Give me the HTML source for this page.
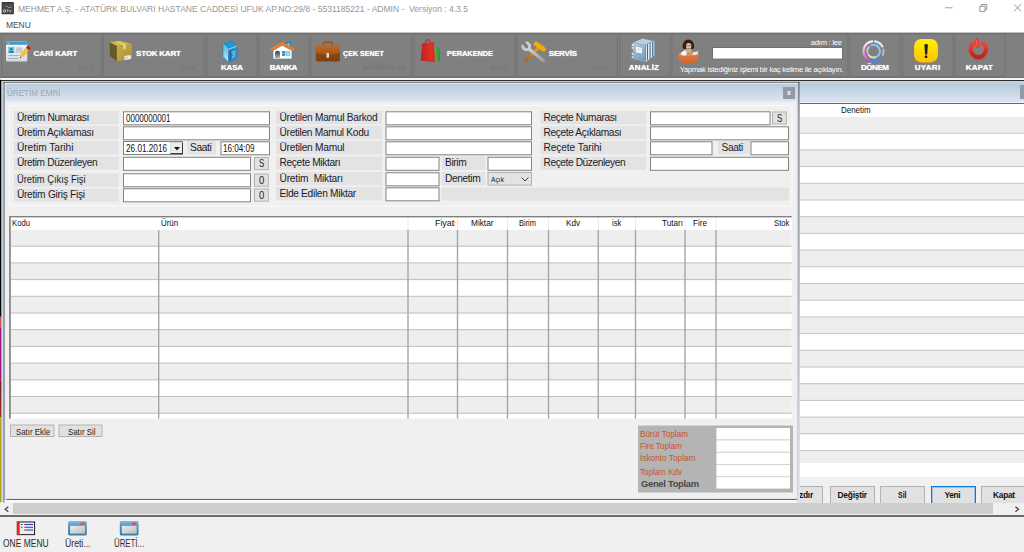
<!DOCTYPE html>
<html lang="tr"><head><meta charset="utf-8"><title>MEHMET A.Ş. - ÜRETİM EMRİ</title>
<style>
html,body{margin:0;padding:0}
body{width:1024px;height:552px;position:relative;overflow:hidden;background:#fff;font-family:"Liberation Sans",sans-serif;color:#1c1c1c}
div,span,svg{position:absolute;box-sizing:border-box;display:block}
span{white-space:nowrap;line-height:1;transform-origin:0 50%}
.lbl{background:#e3e3e3}
.lt{color:#1b1b2b}
.inp{background:#fff;border:1px solid #828282}
.btn{background:#e1e1e1;border:1px solid #b2b2b2}
.tb{background:#808080;border:1px solid #747474}
.tt{font-weight:bold;color:#fff;text-shadow:0 0 1px #e8e8e8}
.te{color:#747474}
.th{color:#111}
.rb{font-weight:bold;color:#111}
.tot{color:#c9532c}
.it{color:#111}
</style></head><body>

<svg style="left:1px;top:1px" width="14" height="14" viewBox="1 1 14 14"><rect x="1.600" y="2.100" width="12.300" height="12.250" rx="0.800" fill="#3a3a3a"/><rect x="2.600" y="3.100" width="10.300" height="10.250" fill="#484848"/><path d="M5.800 6.400h1.800M8.400 7.500h2.600" stroke="#36c050" stroke-width="1" stroke-linecap="round" fill="none"/><path d="M10 5.300h1.400" stroke="#8a8a8a" stroke-width="0.700"/><circle cx="4.500" cy="10.900" r="1.300" fill="none" stroke="#d8d8d8" stroke-width="0.900"/><path d="M7.600 9.600l3.400 2.600M7.600 12v-2.400M10.900 9.800v1.800" stroke="#c8c8c8" stroke-width="0.800" fill="none"/></svg>
<span style="left:18.3px;top:4px;font-size:9.4px;color:#969696;transform:scaleX(0.9111);">MEHMET A.Ş. - ATATÜRK BULVARI HASTANE CADDESİ UFUK AP.NO:29/8 - 5531185221 - ADMIN -&nbsp; Versiyon : 4.3.5</span>
<svg style="left:940px;top:0" width="84" height="16" viewBox="0 0 84 16"><path d="M5 7.8h7.5" stroke="#9a9a9a" stroke-width="1" fill="none"/><path d="M39.8 6.2h5.2v5.2h-5.2zM41.6 6.2v-1.7h5.2v5.2h-1.8" stroke="#8a8a8a" stroke-width="0.9" fill="none"/><path d="M74 4.3l7 7M81 4.3l-7 7" stroke="#8a8a8a" stroke-width="0.9" fill="none"/></svg>
<span style="left:6px;top:20px;font-size:9.4px;color:#484848;transform:scaleX(0.8964);">MENU</span>
<svg style="left:0;top:0" width="1024" height="90" viewBox="0 0 1024 90"><rect x="0" y="32.700" width="1024" height="44.500" fill="#808080"/><rect x="0" y="32.800" width="1024" height="0.900" fill="#6e6e6e"/><rect x="1.85" y="34" width="99.90" height="42.300" fill="none" stroke="#6f6f6f" stroke-width="0.800"/><rect x="103.65" y="34" width="100.40" height="42.300" fill="none" stroke="#6f6f6f" stroke-width="0.800"/><rect x="206.75" y="34" width="50.20" height="42.300" fill="none" stroke="#6f6f6f" stroke-width="0.800"/><rect x="258.95" y="34" width="50.00" height="42.300" fill="none" stroke="#6f6f6f" stroke-width="0.800"/><rect x="310.95" y="34" width="100.50" height="42.300" fill="none" stroke="#6f6f6f" stroke-width="0.800"/><rect x="413.85" y="34" width="101.10" height="42.300" fill="none" stroke="#6f6f6f" stroke-width="0.800"/><rect x="516.85" y="34" width="100.60" height="42.300" fill="none" stroke="#6f6f6f" stroke-width="0.800"/><rect x="619.85" y="34" width="50.10" height="42.300" fill="none" stroke="#6f6f6f" stroke-width="0.800"/><rect x="671.95" y="34" width="176.00" height="42.300" fill="none" stroke="#6f6f6f" stroke-width="0.800"/><rect x="849.95" y="34" width="50.00" height="42.300" fill="none" stroke="#6f6f6f" stroke-width="0.800"/><rect x="902.35" y="34" width="50.60" height="42.300" fill="none" stroke="#6f6f6f" stroke-width="0.800"/><rect x="954.95" y="34" width="50.00" height="42.300" fill="none" stroke="#6f6f6f" stroke-width="0.800"/></svg>
<div style="left:0px;top:76.7px;width:1024px;height:0.9px;background:#727272"></div>
<div style="left:0px;top:77.5px;width:1024px;height:2.4px;background:#f6f6f6"></div>
<div style="left:0px;top:79.8px;width:1024px;height:1.1px;background:#2c2c2c"></div>
<span class="tt" style="left:33.5px;top:50px;font-size:8px;letter-spacing:0.000px;">CARİ KART</span>
<span class="te" style="left:78px;top:64px;font-size:7.8px;transform:scaleX(0.7894);">EKLE</span>
<span class="tt" style="left:136px;top:50px;font-size:8px;letter-spacing:-0.210px;">STOK KART</span>
<span class="te" style="left:180.25px;top:64px;font-size:7.8px;transform:scaleX(0.8019);">EKLE</span>
<span class="tt" style="left:343.25px;top:50px;font-size:8px;transform:scaleX(0.8898);">ÇEK SENET</span>
<span class="te" style="left:362.5px;top:64px;font-size:7.8px;transform:scaleX(0.8807);">BORDROLAR</span>
<span class="tt" style="left:446.75px;top:50px;font-size:8px;transform:scaleX(0.9157);">PERAKENDE</span>
<span class="te" style="left:490.75px;top:64px;font-size:7.8px;transform:scaleX(0.8144);">EKLE</span>
<span class="tt" style="left:548.75px;top:50px;font-size:8px;letter-spacing:-0.173px;">SERVİS</span>
<span class="te" style="left:593px;top:64px;font-size:7.8px;transform:scaleX(0.8269);">EKLE</span>
<span class="tt" style="left:221px;top:64px;font-size:8px;letter-spacing:-0.192px;">KASA</span>
<span class="tt" style="left:269.75px;top:64px;font-size:8px;letter-spacing:-0.309px;">BANKA</span>
<span class="tt" style="left:628.75px;top:64px;font-size:8px;letter-spacing:0.168px;">ANALİZ</span>
<span class="tt" style="left:861px;top:64px;font-size:8px;letter-spacing:-0.451px;">DÖNEM</span>
<span class="tt" style="left:914.75px;top:64px;font-size:8px;letter-spacing:0.299px;">UYARI</span>
<span class="tt" style="left:965.75px;top:64px;font-size:8px;letter-spacing:0.194px;">KAPAT</span>
<svg style="left:0;top:0" width="1024" height="70" viewBox="0 0 1024 70"><rect x="712.200" y="47.200" width="130.600" height="12.100" fill="#6c6c6c"/><rect x="713" y="48" width="129" height="10.600" fill="#fff"/></svg>
<span style="left:810.75px;top:39px;font-size:7.6px;color:#fff;letter-spacing:-0.222px;">adım : lee</span>
<span style="left:679.75px;top:66px;font-size:7.6px;color:#fff;letter-spacing:-0.242px;">Yapmak istediğiniz işlemi bir kaç kelime ile açıklayın.</span>
<div style="left:0px;top:80.9px;width:1024px;height:435px;background:#f0f0f0"></div>
<div style="left:1.3px;top:80.9px;width:1023px;height:20.8px;background:linear-gradient(#c3d3e3,#b9cbdd 18%,#dbe6f1)"></div>
<div style="left:1.3px;top:80.9px;width:2.4px;height:421.5px;background:#c6d6e7"></div>
<div style="left:1019.8px;top:85.3px;width:6px;height:13.6px;background:#8f9ba6"></div>
<div style="left:799.5px;top:101.7px;width:225px;height:1.4px;background:#eef2f6"></div>
<div style="left:799.5px;top:103px;width:225px;height:1px;background:#6a6a6a"></div>
<div style="left:799.5px;top:104px;width:225px;height:372.5px;background:#fff"></div>
<svg style="left:0;top:0" width="1024" height="552" viewBox="0 0 1024 552"><rect x="799.5" y="117.00" width="225" height="16.20" fill="#eeeeee"/><rect x="799.5" y="149.90" width="225" height="16.70" fill="#eeeeee"/><rect x="799.5" y="183.30" width="225" height="16.70" fill="#eeeeee"/><rect x="799.5" y="216.70" width="225" height="16.70" fill="#eeeeee"/><rect x="799.5" y="250.10" width="225" height="16.70" fill="#eeeeee"/><rect x="799.5" y="283.50" width="225" height="16.70" fill="#eeeeee"/><rect x="799.5" y="316.90" width="225" height="16.70" fill="#eeeeee"/><rect x="799.5" y="350.30" width="225" height="16.70" fill="#eeeeee"/><rect x="799.5" y="383.70" width="225" height="16.70" fill="#eeeeee"/><rect x="799.5" y="417.10" width="225" height="16.70" fill="#eeeeee"/><rect x="799.5" y="450.50" width="225" height="12.50" fill="#eeeeee"/><rect x="799.5" y="132.70" width="225" height="1" fill="#c4c4c4"/><rect x="799.5" y="149.40" width="225" height="1" fill="#c4c4c4"/><rect x="799.5" y="166.10" width="225" height="1" fill="#c4c4c4"/><rect x="799.5" y="182.80" width="225" height="1" fill="#c4c4c4"/><rect x="799.5" y="199.50" width="225" height="1" fill="#c4c4c4"/><rect x="799.5" y="216.20" width="225" height="1" fill="#c4c4c4"/><rect x="799.5" y="232.90" width="225" height="1" fill="#c4c4c4"/><rect x="799.5" y="249.60" width="225" height="1" fill="#c4c4c4"/><rect x="799.5" y="266.30" width="225" height="1" fill="#c4c4c4"/><rect x="799.5" y="283.00" width="225" height="1" fill="#c4c4c4"/><rect x="799.5" y="299.70" width="225" height="1" fill="#c4c4c4"/><rect x="799.5" y="316.40" width="225" height="1" fill="#c4c4c4"/><rect x="799.5" y="333.10" width="225" height="1" fill="#c4c4c4"/><rect x="799.5" y="349.80" width="225" height="1" fill="#c4c4c4"/><rect x="799.5" y="366.50" width="225" height="1" fill="#c4c4c4"/><rect x="799.5" y="383.20" width="225" height="1" fill="#c4c4c4"/><rect x="799.5" y="399.90" width="225" height="1" fill="#c4c4c4"/><rect x="799.5" y="416.60" width="225" height="1" fill="#c4c4c4"/><rect x="799.5" y="433.30" width="225" height="1" fill="#c4c4c4"/><rect x="799.5" y="450.00" width="225" height="1" fill="#c4c4c4"/></svg>
<span class="th" style="left:840.6px;top:106px;font-size:9px;transform:scaleX(0.8832);">Denetim</span>
<div class="btn" style="left:780px;top:486.2px;width:43px;height:20px;"></div>
<div class="btn" style="left:830px;top:486.2px;width:45px;height:20px;"></div>
<span class="rb" style="left:837.5px;top:491px;font-size:8.4px;letter-spacing:-0.225px;">Değiştir</span>
<div class="btn" style="left:880px;top:486.2px;width:45px;height:20px;"></div>
<span class="rb" style="left:897.5px;top:491px;font-size:8.4px;transform:scaleX(0.8293);">Sil</span>
<div class="btn" style="left:930.5px;top:486.2px;width:45.0px;height:20px;border:1px solid #0a7ad8;box-shadow:inset 0 0 0 1px rgba(10,122,216,0.3);"></div>
<span class="rb" style="left:944.5px;top:491px;font-size:8.4px;letter-spacing:-0.353px;">Yeni</span>
<div class="btn" style="left:981px;top:486.2px;width:49px;height:20px;"></div>
<span class="rb" style="left:993px;top:491px;font-size:8.4px;letter-spacing:-0.285px;">Kapat</span>
<div style="left:799.5px;top:487px;width:23px;height:15px;overflow:hidden"><span class="rb" style="right:9.6px;top:4px;font-size:8.4px;letter-spacing:-0.250px">Yazdır</span></div>
<svg style="left:0;top:0" width="1024" height="552" viewBox="0 0 1024 552"><defs><linearGradient id="gTitle" x1="0" y1="0" x2="0" y2="1"><stop offset="0" stop-color="#b9cbdd"/><stop offset="1" stop-color="#dbe6f1"/></linearGradient><linearGradient id="gRB" x1="0" y1="0" x2="0" y2="1"><stop offset="0" stop-color="#4a4e54"/><stop offset="0.08" stop-color="#6a7078"/><stop offset="0.55" stop-color="#98a2ac"/><stop offset="0.85" stop-color="#c8d0da"/><stop offset="1" stop-color="#dde4ec"/></linearGradient></defs><rect x="3.600" y="81.900" width="795.900" height="420.700" fill="#f0f0f0"/><rect x="4.700" y="83.600" width="792.200" height="18" fill="url(#gTitle)"/><rect x="4.700" y="82.800" width="792.200" height="0.900" fill="#e3ebf5"/><rect x="3.600" y="81.900" width="795.900" height="0.900" fill="#6a6a6a"/><rect x="3.550" y="81.900" width="1.200" height="420.700" fill="#5c5c5c"/><rect x="4.700" y="83.600" width="0.800" height="418.500" fill="#e2eaf3"/><rect x="798.200" y="81.900" width="1.300" height="420.700" fill="url(#gRB)"/><rect x="796.900" y="82.800" width="1.300" height="419.800" fill="#c6d6ea"/><rect x="4.700" y="500" width="792.200" height="2.600" fill="#f8f8f8"/><rect x="6.200" y="498.900" width="790.700" height="1.100" fill="#6a6a6a"/></svg>
<span style="left:6.5px;top:88px;font-size:9.6px;color:#a2a6ae;transform:scaleX(0.8433);">ÜRETİM EMRİ</span>
<div style="left:782.8px;top:86.9px;width:12.1px;height:11.8px;background:#8f9ba6"></div>
<span style="left:787px;top:89px;font-size:7px;font-weight:bold;color:#fff">x</span>
<svg style="left:0;top:0" width="1024" height="552" viewBox="0 0 1024 552"><rect x="9.00" y="105.00" width="783.50" height="101.50" fill="#fafafa"/><rect x="10.00" y="106.00" width="781.50" height="99.50" fill="#f0f0f0"/><rect x="14.00" y="111.00" width="104.70" height="13.30" fill="#e3e3e3"/><rect x="14.00" y="126.00" width="104.70" height="13.30" fill="#e3e3e3"/><rect x="14.00" y="141.00" width="104.70" height="13.30" fill="#e3e3e3"/><rect x="14.00" y="156.50" width="104.70" height="13.30" fill="#e3e3e3"/><rect x="14.00" y="173.50" width="104.70" height="13.30" fill="#e3e3e3"/><rect x="14.00" y="188.50" width="104.70" height="13.30" fill="#e3e3e3"/><rect x="276.00" y="111.00" width="106.00" height="13.30" fill="#e3e3e3"/><rect x="276.00" y="126.00" width="106.00" height="13.30" fill="#e3e3e3"/><rect x="276.00" y="141.00" width="106.00" height="13.30" fill="#e3e3e3"/><rect x="276.00" y="156.50" width="106.00" height="13.30" fill="#e3e3e3"/><rect x="276.00" y="172.00" width="106.00" height="13.30" fill="#e3e3e3"/><rect x="276.00" y="187.00" width="106.00" height="13.30" fill="#e3e3e3"/><rect x="540.50" y="111.00" width="105.50" height="13.30" fill="#e3e3e3"/><rect x="540.50" y="126.00" width="105.50" height="13.30" fill="#e3e3e3"/><rect x="540.50" y="141.00" width="105.50" height="13.30" fill="#e3e3e3"/><rect x="540.50" y="156.50" width="105.50" height="13.30" fill="#e3e3e3"/><rect x="123.00" y="111.30" width="147.00" height="14.00" fill="#828282"/><rect x="124.00" y="112.30" width="145.00" height="12.00" fill="#ffffff"/><rect x="123.00" y="126.30" width="147.00" height="14.00" fill="#828282"/><rect x="124.00" y="127.30" width="145.00" height="12.00" fill="#ffffff"/><rect x="187.00" y="141.00" width="29.00" height="13.30" fill="#e3e3e3"/><rect x="220.50" y="141.30" width="49.50" height="14.00" fill="#828282"/><rect x="221.50" y="142.30" width="47.50" height="12.00" fill="#ffffff"/><rect x="123.00" y="156.80" width="128.00" height="14.00" fill="#828282"/><rect x="124.00" y="157.80" width="126.00" height="12.00" fill="#ffffff"/><rect x="254.00" y="157.00" width="14.80" height="13.20" fill="#b2b2b2"/><rect x="255.00" y="158.00" width="12.80" height="11.20" fill="#e1e1e1"/><rect x="123.00" y="173.30" width="128.00" height="14.00" fill="#828282"/><rect x="124.00" y="174.30" width="126.00" height="12.00" fill="#ffffff"/><rect x="254.00" y="173.50" width="14.80" height="13.20" fill="#b2b2b2"/><rect x="255.00" y="174.50" width="12.80" height="11.20" fill="#e1e1e1"/><rect x="123.00" y="188.30" width="128.00" height="14.00" fill="#828282"/><rect x="124.00" y="189.30" width="126.00" height="12.00" fill="#ffffff"/><rect x="254.00" y="188.50" width="14.80" height="13.20" fill="#b2b2b2"/><rect x="255.00" y="189.50" width="12.80" height="11.20" fill="#e1e1e1"/><rect x="385.50" y="111.30" width="146.50" height="14.00" fill="#828282"/><rect x="386.50" y="112.30" width="144.50" height="12.00" fill="#ffffff"/><rect x="385.50" y="126.30" width="146.50" height="14.00" fill="#828282"/><rect x="386.50" y="127.30" width="144.50" height="12.00" fill="#ffffff"/><rect x="385.50" y="141.30" width="146.50" height="14.00" fill="#828282"/><rect x="386.50" y="142.30" width="144.50" height="12.00" fill="#ffffff"/><rect x="385.50" y="156.80" width="54.00" height="14.00" fill="#828282"/><rect x="386.50" y="157.80" width="52.00" height="12.00" fill="#ffffff"/><rect x="385.50" y="172.30" width="54.00" height="14.00" fill="#828282"/><rect x="386.50" y="173.30" width="52.00" height="12.00" fill="#ffffff"/><rect x="385.50" y="187.30" width="54.00" height="14.00" fill="#828282"/><rect x="386.50" y="188.30" width="52.00" height="12.00" fill="#ffffff"/><rect x="441.50" y="156.50" width="44.00" height="13.30" fill="#e3e3e3"/><rect x="441.50" y="172.00" width="44.00" height="13.30" fill="#e3e3e3"/><rect x="487.50" y="156.80" width="44.50" height="14.00" fill="#828282"/><rect x="488.50" y="157.80" width="42.50" height="12.00" fill="#ffffff"/><rect x="487.50" y="172.00" width="44.50" height="13.60" fill="#b0b0b0"/><rect x="488.50" y="173.00" width="42.50" height="11.60" fill="#e3e3e3"/><rect x="441.50" y="187.50" width="347.50" height="13.00" fill="#e3e3e3"/><rect x="650.00" y="111.30" width="120.50" height="14.00" fill="#828282"/><rect x="651.00" y="112.30" width="118.50" height="12.00" fill="#ffffff"/><rect x="772.00" y="111.50" width="14.80" height="13.00" fill="#b2b2b2"/><rect x="773.00" y="112.50" width="12.80" height="11.00" fill="#e1e1e1"/><rect x="650.00" y="126.30" width="139.00" height="14.00" fill="#828282"/><rect x="651.00" y="127.30" width="137.00" height="12.00" fill="#ffffff"/><rect x="650.00" y="141.30" width="62.50" height="14.00" fill="#828282"/><rect x="651.00" y="142.30" width="60.50" height="12.00" fill="#ffffff"/><rect x="718.00" y="141.00" width="32.00" height="13.30" fill="#e3e3e3"/><rect x="750.50" y="141.30" width="38.50" height="14.00" fill="#828282"/><rect x="751.50" y="142.30" width="36.50" height="12.00" fill="#ffffff"/><rect x="650.00" y="156.80" width="139.00" height="14.00" fill="#828282"/><rect x="651.00" y="157.80" width="137.00" height="12.00" fill="#ffffff"/></svg>
<span class="lt" style="left:16.9px;top:113px;font-size:10.2px;letter-spacing:-0.320px;">Üretim Numarası</span>
<span class="lt" style="left:16.9px;top:128px;font-size:10.2px;letter-spacing:-0.303px;">Üretim Açıklaması</span>
<span class="lt" style="left:16.9px;top:143px;font-size:10.2px;letter-spacing:-0.032px;">Üretim Tarihi</span>
<span class="lt" style="left:16.9px;top:158px;font-size:10.2px;letter-spacing:-0.366px;">Üretim Düzenleyen</span>
<span class="lt" style="left:16.9px;top:175px;font-size:10.2px;transform:scaleX(0.9181);">Üretim Çıkış Fişi</span>
<span class="lt" style="left:16.9px;top:190px;font-size:10.2px;letter-spacing:-0.263px;">Üretim Giriş Fişi</span>
<span class="lt" style="left:279.5px;top:113px;font-size:10.2px;letter-spacing:-0.274px;">Üretilen Mamul Barkod</span>
<span class="lt" style="left:279.5px;top:128px;font-size:10.2px;letter-spacing:-0.304px;">Üretilen Mamul Kodu</span>
<span class="lt" style="left:279.5px;top:143px;font-size:10.2px;letter-spacing:-0.260px;">Üretilen Mamul</span>
<span class="lt" style="left:279.5px;top:158px;font-size:10.2px;letter-spacing:-0.346px;">Reçete Miktarı</span>
<span class="lt" style="left:279.5px;top:174px;font-size:10.2px;letter-spacing:-0.188px;">Üretim&nbsp; Miktarı</span>
<span class="lt" style="left:279.5px;top:189px;font-size:10.2px;letter-spacing:-0.321px;">Elde Edilen Miktar</span>
<span class="lt" style="left:543.5px;top:113px;font-size:10.2px;letter-spacing:-0.399px;">Reçete Numarası</span>
<span class="lt" style="left:543.5px;top:128px;font-size:10.2px;letter-spacing:-0.386px;">Reçete Açıklaması</span>
<span class="lt" style="left:543.5px;top:143px;font-size:10.2px;letter-spacing:-0.102px;">Reçete Tarihi</span>
<span class="lt" style="left:543.5px;top:158px;font-size:10.2px;letter-spacing:-0.420px;">Reçete Düzenleyen</span>
<span class="it" style="left:125.5px;top:113px;font-size:10.6px;transform:scaleX(0.7552);">0000000001</span>
<div class="inp" style="left:123px;top:141.3px;width:59.5px;height:14px;border-right:none"></div>
<span class="it" style="left:125.5px;top:143px;font-size:10.6px;transform:scaleX(0.7731);">26.01.2016</span>
<div style="left:170.3px;top:141.8px;width:12.3px;height:12.6px;background:#ececec;border:1px solid #3c3c3c;border-top-color:#d8d8d8;border-left-color:#dcdcdc"></div>
<svg style="left:173.500px;top:146.800px" width="6" height="4" viewBox="0 0 6 4"><path d="M0 0h6L3 3.4z" fill="#111"/></svg>
<span class="lt" style="left:190px;top:143px;font-size:10.2px;letter-spacing:-0.385px;">Saati</span>
<span class="it" style="left:223px;top:143px;font-size:10.6px;transform:scaleX(0.7636);">16:04:09</span>
<span style="left:258.7px;top:158px;font-size:11px;color:#222;transform:scaleX(0.7217);">S</span>
<span style="left:258.7px;top:175px;font-size:11px;color:#222;transform:scaleX(0.8653);">0</span>
<span style="left:258.7px;top:190px;font-size:11px;color:#222;transform:scaleX(0.8653);">0</span>
<span class="lt" style="left:445px;top:158px;font-size:10.2px;letter-spacing:-0.378px;">Birim</span>
<span class="lt" style="left:445px;top:174px;font-size:10.2px;letter-spacing:-0.375px;">Denetim</span>
<span style="left:490.8px;top:176px;font-size:7.8px;color:#222;transform:scaleX(0.8568);">Açık</span>
<svg style="left:521px;top:176.700px" width="8" height="5" viewBox="0 0 8 5"><path d="M0.5 0.5L4 4l3.5-3.5" stroke="#444" stroke-width="1" fill="none"/></svg>
<span style="left:776.7px;top:113px;font-size:11px;color:#222;transform:scaleX(0.7217);">S</span>
<span class="lt" style="left:721.5px;top:143px;font-size:10.2px;letter-spacing:-0.385px;">Saati</span>
<svg style="left:0;top:0" width="1024" height="552" viewBox="0 0 1024 552"><rect x="9" y="216.2" width="782.7" height="202.3" fill="#fff"/><rect x="10.9" y="230.00" width="780.8" height="16.20" fill="#eeeeee"/><rect x="10.9" y="262.90" width="780.8" height="16.70" fill="#eeeeee"/><rect x="10.9" y="296.30" width="780.8" height="16.70" fill="#eeeeee"/><rect x="10.9" y="329.70" width="780.8" height="16.70" fill="#eeeeee"/><rect x="10.9" y="363.10" width="780.8" height="16.70" fill="#eeeeee"/><rect x="10.9" y="396.50" width="780.8" height="16.70" fill="#eeeeee"/><rect x="10.9" y="245.70" width="780.8" height="1" fill="#bebebe"/><rect x="10.9" y="262.40" width="780.8" height="1" fill="#bebebe"/><rect x="10.9" y="279.10" width="780.8" height="1" fill="#bebebe"/><rect x="10.9" y="295.80" width="780.8" height="1" fill="#bebebe"/><rect x="10.9" y="312.50" width="780.8" height="1" fill="#bebebe"/><rect x="10.9" y="329.20" width="780.8" height="1" fill="#bebebe"/><rect x="10.9" y="345.90" width="780.8" height="1" fill="#bebebe"/><rect x="10.9" y="362.60" width="780.8" height="1" fill="#bebebe"/><rect x="10.9" y="379.30" width="780.8" height="1" fill="#bebebe"/><rect x="10.9" y="396.00" width="780.8" height="1" fill="#bebebe"/><rect x="10.9" y="412.70" width="780.8" height="1" fill="#bebebe"/><rect x="158.00" y="230" width="1.4" height="188.5" fill="#a6a6a6"/><rect x="407.30" y="230" width="1.4" height="188.5" fill="#a6a6a6"/><rect x="407.50" y="217.4" width="1" height="12.6" fill="#ebebeb"/><rect x="456.80" y="230" width="1.4" height="188.5" fill="#a6a6a6"/><rect x="457.00" y="217.4" width="1" height="12.6" fill="#ebebeb"/><rect x="506.80" y="230" width="1.4" height="188.5" fill="#a6a6a6"/><rect x="507.00" y="217.4" width="1" height="12.6" fill="#ebebeb"/><rect x="547.80" y="230" width="1.4" height="188.5" fill="#a6a6a6"/><rect x="548.00" y="217.4" width="1" height="12.6" fill="#ebebeb"/><rect x="597.60" y="230" width="1.4" height="188.5" fill="#a6a6a6"/><rect x="597.80" y="217.4" width="1" height="12.6" fill="#ebebeb"/><rect x="634.80" y="230" width="1.4" height="188.5" fill="#a6a6a6"/><rect x="635.00" y="217.4" width="1" height="12.6" fill="#ebebeb"/><rect x="684.30" y="230" width="1.4" height="188.5" fill="#a6a6a6"/><rect x="684.50" y="217.4" width="1" height="12.6" fill="#ebebeb"/><rect x="715.30" y="230" width="1.4" height="188.5" fill="#a6a6a6"/><rect x="715.50" y="217.4" width="1" height="12.6" fill="#ebebeb"/><rect x="9" y="216.2" width="782.7" height="1.1" fill="#606060"/><rect x="9" y="216.2" width="1.9" height="202.3" fill="#8e8e8e"/></svg>
<span class="th" style="left:12px;top:219px;font-size:9px;transform:scaleX(0.8559);">Kodu</span>
<span class="th" style="left:161px;top:219px;font-size:9px;transform:scaleX(0.8711);">Ürün</span>
<span class="th" style="left:470.5px;top:219px;font-size:9px;transform:scaleX(0.9184);">Miktar</span>
<span class="th" style="left:518.5px;top:219px;font-size:9px;transform:scaleX(0.8293);">Birim</span>
<span class="th" style="left:565.5px;top:219px;font-size:9px;transform:scaleX(0.9023);">Kdv</span>
<span class="th" style="left:612px;top:219px;font-size:9px;transform:scaleX(0.8636);">isk</span>
<span class="th" style="left:661.5px;top:219px;font-size:9px;transform:scaleX(0.9057);">Tutarı</span>
<span class="th" style="left:693px;top:219px;font-size:9px;transform:scaleX(0.9032);">Fire</span>
<span class="th" style="left:774px;top:219px;font-size:9px;transform:scaleX(0.8604);">Stok</span>
<div style="left:430px;top:217px;width:25.3px;height:12.5px;overflow:hidden">
<span class="th" style="left:5px;top:2px;font-size:9px;letter-spacing:-0.094px;">Fiyatı</span>
</div>
<svg style="left:0;top:0" width="1024" height="552" viewBox="0 0 1024 552"><rect x="10.00" y="424.50" width="44.50" height="12.50" fill="#b2b2b2"/><rect x="11.00" y="425.50" width="42.50" height="10.50" fill="#e1e1e1"/><rect x="58.50" y="424.50" width="44.00" height="12.50" fill="#b2b2b2"/><rect x="59.50" y="425.50" width="42.00" height="10.50" fill="#e1e1e1"/><rect x="638.00" y="425.50" width="155.00" height="67.00" fill="#b4b4b4"/><rect x="716.50" y="428.00" width="73.50" height="60.50" fill="#cfcfcf"/><rect x="716.50" y="428.00" width="73.50" height="11.30" fill="#fff"/><rect x="716.50" y="440.40" width="73.50" height="11.30" fill="#fff"/><rect x="716.50" y="452.80" width="73.50" height="11.30" fill="#fff"/><rect x="716.50" y="465.00" width="73.50" height="11.30" fill="#fff"/><rect x="716.50" y="477.20" width="73.50" height="11.30" fill="#fff"/></svg>
<span style="left:15.5px;top:428px;font-size:9.2px;color:#222;transform:scaleX(0.8537);">Satır Ekle</span>
<span style="left:67.5px;top:428px;font-size:9.2px;color:#222;transform:scaleX(0.8548);">Satır Sil</span>
<span class="tot" style="left:640px;top:430px;font-size:9px;transform:scaleX(0.9078);">Bürüt Toplam</span>
<span class="tot" style="left:640px;top:442px;font-size:9px;transform:scaleX(0.8963);">Fire Toplam</span>
<span class="tot" style="left:640px;top:454px;font-size:9px;transform:scaleX(0.9193);">İskonto Toplam</span>
<span class="tot" style="left:640px;top:468px;font-size:9px;transform:scaleX(0.8930);">Toplam Kdv</span>
<span style="left:641px;top:479px;font-size:9.4px;font-weight:bold;color:#474747;letter-spacing:-0.287px;">Genel Toplam</span>
<div style="left:0px;top:502.6px;width:1024px;height:12.6px;background:#f0f0f0"></div>
<div style="left:13px;top:503.2px;width:980px;height:10.8px;background:#cdcdcd"></div>
<svg style="left:3.600px;top:505.900px" width="6" height="7" viewBox="0 0 6 7"><path d="M4.300 0.700L1.200 3.200l3.100 2.500" stroke="#484848" stroke-width="1.300" fill="none"/></svg>
<svg style="left:1013.800px;top:505.900px" width="6" height="7" viewBox="0 0 6 7"><path d="M1.400 0.700L4.500 3.200l-3.100 2.500" stroke="#484848" stroke-width="1.300" fill="none"/></svg>
<div style="left:0px;top:515.2px;width:1024px;height:1.8px;background:#6a6a6a"></div>
<div style="left:0px;top:517px;width:1024px;height:36px;background:#f0f0f0"></div>
<span style="left:2.8px;top:539px;font-size:10px;color:#2a2a2a;transform:scaleX(0.8478);">ONE MENU</span>
<span style="left:64.8px;top:539px;font-size:10px;color:#2a2a2a;transform:scaleX(0.8658);">Üreti...</span>
<span style="left:114.2px;top:539px;font-size:10px;color:#2a2a2a;transform:scaleX(0.7850);">ÜRETİ...</span>
<svg style="left:0;top:0" width="4" height="552" viewBox="0 0 4 552"><defs><linearGradient id="gStrip" x1="0" y1="0" x2="0" y2="1"><stop offset="0" stop-color="#6a1c24"/><stop offset="1" stop-color="#a42a10"/></linearGradient></defs><rect x="0" y="79.8" width="1.25" height="236.9" fill="#000"/><rect x="0" y="316.7" width="1.25" height="11.1" fill="#d0504a"/><rect x="0" y="327.8" width="1.25" height="52.9" fill="#a01078"/><rect x="0" y="380.7" width="1.25" height="36.8" fill="url(#gStrip)"/><rect x="0" y="417.5" width="1.25" height="84.8" fill="#b5a01a"/></svg>
<svg style="left:0;top:33px" width="1024" height="44" viewBox="0 33 1024 44">
<defs>
<linearGradient id="gCard" x1="0" y1="0" x2="0" y2="1"><stop offset="0" stop-color="#f7f8fa"/><stop offset="1" stop-color="#d6dade"/></linearGradient>
<linearGradient id="gBoxR" x1="0" y1="0" x2="1" y2="1"><stop offset="0" stop-color="#c9ad45"/><stop offset="1" stop-color="#ab9136"/></linearGradient>
<linearGradient id="gSafeL" x1="0" y1="0" x2="0" y2="1"><stop offset="0" stop-color="#4fb2de"/><stop offset="1" stop-color="#cdeaf5"/></linearGradient>
<linearGradient id="gSafeF" x1="0" y1="0" x2="0" y2="1"><stop offset="0" stop-color="#3aa0d6"/><stop offset="1" stop-color="#1d7cc0"/></linearGradient>
<linearGradient id="gDoor" x1="0" y1="0" x2="0" y2="1"><stop offset="0" stop-color="#3a3a3a"/><stop offset="1" stop-color="#b0b0b0"/></linearGradient>
<linearGradient id="gCase1" x1="0" y1="0" x2="0" y2="1"><stop offset="0" stop-color="#c06a26"/><stop offset="1" stop-color="#a6561a"/></linearGradient>
<linearGradient id="gCase2" x1="0" y1="0" x2="0" y2="1"><stop offset="0" stop-color="#9a5018"/><stop offset="1" stop-color="#7e3e10"/></linearGradient>
<linearGradient id="gRed" x1="0" y1="0" x2="1" y2="0"><stop offset="0" stop-color="#b8241f"/><stop offset="0.7" stop-color="#e62f24"/><stop offset="1" stop-color="#d42a20"/></linearGradient>
<linearGradient id="gGreen" x1="0" y1="0" x2="1" y2="0"><stop offset="0" stop-color="#5cb050"/><stop offset="1" stop-color="#2f8a34"/></linearGradient>
<linearGradient id="gHandle" x1="0" y1="1" x2="1" y2="0"><stop offset="0" stop-color="#a8621c"/><stop offset="1" stop-color="#eda11c"/></linearGradient>
<linearGradient id="gWrench" x1="0" y1="0" x2="1" y2="1"><stop offset="0" stop-color="#d4d4d4"/><stop offset="1" stop-color="#9c9c9c"/></linearGradient>
<linearGradient id="gNote" x1="0" y1="0" x2="0.3" y2="1"><stop offset="0" stop-color="#b4cde2"/><stop offset="1" stop-color="#7a9fc2"/></linearGradient>
<linearGradient id="gDesk" x1="0" y1="0" x2="0" y2="1"><stop offset="0" stop-color="#e07a40"/><stop offset="1" stop-color="#cc6a34"/></linearGradient>
<linearGradient id="gWarn" x1="0" y1="0" x2="0" y2="1"><stop offset="0" stop-color="#fff200"/><stop offset="1" stop-color="#ffc000"/></linearGradient>
<linearGradient id="gPink" x1="0" y1="0" x2="0" y2="1"><stop offset="0" stop-color="#fdeefa"/><stop offset="0.55" stop-color="#f0a8e4"/><stop offset="1" stop-color="#d84cc0"/></linearGradient>
<linearGradient id="gPow" x1="0" y1="0" x2="0" y2="1"><stop offset="0" stop-color="#f04838"/><stop offset="1" stop-color="#d01c10"/></linearGradient>
</defs>

<!-- CARI KART: id card with pencil -->
<g>
<rect x="6" y="41.6" width="21.25" height="20" rx="1.4" fill="url(#gCard)"/>
<path d="M6 44.7v-1.7a1.4 1.4 0 0 1 1.4-1.4h18.45a1.4 1.4 0 0 1 1.4 1.4v1.7z" fill="#3f9bd0"/>
<circle cx="8.4" cy="43.2" r="0.8" fill="#f5c400"/>
<rect x="8" y="47" width="6.5" height="6" fill="#86c8dc"/>
<circle cx="11.3" cy="49.2" r="1.35" fill="#1f7fb0"/>
<path d="M8.7 53c0-1.6 1.1-2.3 2.6-2.3s2.6.7 2.6 2.3z" fill="#1f7fb0"/>
<rect x="16" y="47.25" width="6.5" height="5.5" fill="#c3cbd4"/>
<path d="M8.5 55.5h11M8.5 58.5h10" stroke="#86aacc" stroke-width="0.8" fill="none"/>
<g transform="translate(20 57.9) rotate(-50.2)">
<path d="M0 0l2.6-1.9v3.8z" fill="#e8c890"/>
<path d="M0 0l1.1-.8v1.6z" fill="#222"/>
<rect x="2.6" y="-1.9" width="9" height="3.8" fill="#f2b62c"/>
<rect x="2.6" y="-0.6" width="9" height="1.2" fill="#f8cc50"/>
<rect x="11.6" y="-2" width="3" height="4" rx="0.6" fill="#c0201c"/>
</g>
</g>

<!-- STOK KART: cardboard box -->
<g>
<path d="M109.4 42.25L120.6 40.9 132 44 116.9 46z" fill="#d2b650"/>
<path d="M109.4 42.25L116.9 46 116.9 61.6 110 56z" fill="#6a5928"/>
<path d="M116.9 46L132 44 131.9 59.1 116.9 61.6z" fill="url(#gBoxR)"/>
<path d="M115.4 41.5L118.4 41.15 125.9 44.8 125.9 49 123.1 49.4 123.1 45.3z" fill="#e6d07c"/>
<path d="M124.4 55.9L130.9 54.9 130.9 58.9 124.4 59.9z" fill="#ececec"/>
<path d="M125.2 57.6l3-.5" stroke="#999" stroke-width="0.6"/>
</g>

<!-- KASA: blue safe -->
<g stroke-linejoin="round">
<path d="M223 44.1L231.4 40.5 237.1 46 228 49.4z" fill="#1e9ad0"/>
<path d="M223 44.1L228 49.4 228.3 62.25 223 56.6z" fill="url(#gSafeL)"/>
<path d="M228 49.4L237.1 46 237.1 57.9 228.3 62.25z" fill="url(#gSafeF)"/>
<path d="M229.6 50.6L235.6 48.4 235.6 57.6 229.8 60.4z" fill="#1668ae"/>
<path d="M231 51.2L235.6 49.5 235.6 57.4 231.1 59.5z" fill="#56b2e2"/>
<path d="M231.6 52v6.6M231.6 55.2l1.3-.4" stroke="#1668ae" stroke-width="0.7" fill="none"/>
<path d="M223 44.1L231.4 40.5 237.1 46 237.1 57.9 228.3 62.25 223 56.6z" fill="none" stroke="#1b84c4" stroke-width="0.7"/>
<path d="M223.2 44.3L228 49.4 237 46" fill="none" stroke="#d8f0fa" stroke-width="0.6"/>
</g>

<!-- BANKA: house -->
<g>
<rect x="286" y="42" width="5" height="6" fill="#2a80a8"/>
<rect x="287.4" y="43.2" width="2.4" height="4" fill="#8ec6de"/>
<path d="M273 59V50.6L282.25 45.3 292 50.6V59z" fill="#fff" stroke="#4a8eae" stroke-width="0.7"/>
<path d="M271.7 49.3L282.25 43.6 293.2 49.3" fill="none" stroke="#f07a28" stroke-width="2.700" stroke-linecap="round" stroke-linejoin="miter"/>
<path d="M275 57.9v-5.2a2.5 1.9 0 0 1 5 0v5.2z" fill="url(#gDoor)"/>
<rect x="282" y="51" width="3.4" height="4.9" fill="#3f8fb8"/>
<rect x="286" y="51" width="4.3" height="4.9" fill="#8cc4dc"/>
<path d="M282 53.4h8.3M288.1 51v4.9" stroke="#e8f2f8" stroke-width="0.4"/>
</g>

<!-- CEK SENET: briefcase -->
<g>
<path d="M323.4 45.6v-2.4a1 1 0 0 1 1-1h7a1 1 0 0 1 1 1v2.4" fill="none" stroke="#96501a" stroke-width="1.4"/>
<rect x="315.75" y="44.9" width="24.25" height="16.7" rx="2.4" fill="url(#gCase2)"/>
<path d="M315.75 47.3a2.4 2.4 0 0 1 2.4-2.4h19.45a2.4 2.4 0 0 1 2.4 2.4v4.6c-5 3.2-19.2 3.2-24.25 0z" fill="url(#gCase1)"/>
<rect x="326.5" y="53" width="2.5" height="4.75" rx="0.7" fill="#f3e8de"/>
<rect x="327.2" y="54.2" width="1.1" height="2.3" fill="#d8c4b4"/>
</g>

<!-- PERAKENDE: shopping bags -->
<g>
<path d="M435.2 48.4a1.6 1.4 0 0 1 3.2 0" fill="none" stroke="#3a9a3c" stroke-width="0.7"/>
<path d="M434.3 47.6L439.6 47.9 440.3 61.4 434.8 61.8z" fill="url(#gGreen)"/>
<path d="M425.6 43.2v-1.9a1.4 1.4 0 0 1 1.4-1.4h1.6a1.4 1.4 0 0 1 1.4 1.4v1.4" fill="none" stroke="#d42a22" stroke-width="1.2"/>
<path d="M422 43.4L433.9 42 435 62.25 420.75 60.7z" fill="url(#gRed)"/>
</g>

<!-- SERVIS: wrench & hammer -->
<g>
<path d="M525 61L538.4 47.9" stroke="url(#gHandle)" stroke-width="3.2" stroke-linecap="butt" fill="none"/>
<g transform="translate(539.9 46.6) rotate(35)">
<path d="M-6.6 -1.9c.8-1 2-.9 2.6-.2l1.2 0c.6-.9 2-.9 2.6 0l1.6 0c.6-.9 2-.9 2.6 0l1 0c1.4 0 2 1 2 2.1s-.6 2.100-2 2.100l-1 0c-.6.900-2 .9-2.600 0l-1.600 0c-.6.900-2 .900-2.600 0l-1.200 0c-.6.700-1.800.800-2.600-.2z" fill="#f7ab00"/>
</g>
<path d="M528 48.200L543.600 60.800" stroke="url(#gWrench)" stroke-width="3.400" stroke-linecap="round" fill="none"/>
<circle cx="526.300" cy="46.400" r="4.800" fill="#cdcdcd"/>
<g transform="translate(526.300 46.400) rotate(-128)"><rect x="-0.300" y="-1.750" width="6" height="3.500" fill="#808080"/><circle cx="-0.300" cy="0" r="1.750" fill="#808080"/></g>
</g>

<!-- ANALIZ: notebooks -->
<g>
<path d="M632.9 42.4L642.9 38.4 654.4 40.9 654.4 55.2 645.4 62.4z" fill="#5f7f9e"/>
<path d="M645.4 45.25L654.4 40.9 654.4 55.2 645.4 62.4z" fill="#e8eef4"/>
<path d="M647.5 44.3v16.300M650.100 43v15.800M652.700 41.700v14.800" stroke="#4a6888" stroke-width="1.1"/>
<path d="M654 41.100v14.300" stroke="#7fa6c8" stroke-width="0.9"/>
<path d="M632.9 42.4L642.9 38.4 654.4 40.9 645.4 45.25z" fill="#9dbcd6"/>
<path d="M636 41.600l9 2.300M638.600 40.500l9 2.300M641.200 39.400l9.200 2.300" stroke="#e8eef4" stroke-width="0.7"/>
<path d="M632.9 42.4L645.4 45.25 645.4 62.4 632.9 59z" fill="url(#gNote)"/>
<path d="M645.4 45.25v17.150" stroke="#5c82a8" stroke-width="0.8"/>
<path d="M636 46.500L642 47.900 642 53.600 636 52.200z" fill="#f4f6f8"/>
<path d="M637 48.400l4 .9M637 50l4 .9" stroke="#c8ccd0" stroke-width="0.6"/>
<g fill="#eef2f6"><circle cx="632.500" cy="45" r="0.9"/><circle cx="632.500" cy="47.800" r="0.9"/><circle cx="632.500" cy="54" r="0.9"/><circle cx="632.500" cy="57.100" r="0.9"/></g>
</g>

<!-- assistant at desk -->
<g>
<path d="M682.700 48.600c-.6-5 1.500-9.100 5.700-9.100s6.300 4.100 5.600 9.100c-1.500.7-3 .5-3.700 0h-3.800c-.8.500-2.300.7-3.800 0z" fill="#3a1b16"/>
<ellipse cx="688.700" cy="45.900" rx="2.700" ry="2.900" fill="#ecc6a6"/>
<path d="M686.100 45.600h5.200" stroke="#8a8a8a" stroke-width="1.300"/>
<circle cx="688.400" cy="48.400" r="0.550" fill="#e03030"/>
<path d="M685.600 49.600l1.400-.6h3.200l1.400.6 .8 5h-7.600z" fill="#86c6c6"/>
<path d="M685.800 49.300l1.200 3M691.400 49.300l-1 3.400" stroke="#c8a830" stroke-width="0.900"/>
<path d="M678 54.300c0-2.100 20.900-2.100 20.900 0l-1.700 7.300c-1.500 2.500-16 2.500-17.500 0z" fill="url(#gDesk)"/>
<ellipse cx="688.450" cy="54.300" rx="10.450" ry="1.700" fill="#e88850"/>
<path d="M680.500 54.200l1.500-2.600 3-1.400 1.800 1.600-.6 3.600-3.600.2z" fill="#f6f6f6"/>
<path d="M692 54.600l1.300-2.700 3.400-.2 1.700-1.400-.8 3.600-2.700 1.300z" fill="#e2e4e8"/>
<path d="M681.400 51.200l1.400-1" stroke="#222" stroke-width="0.600"/>
</g>

<!-- DONEM: ring chart -->
<g fill="none" stroke-linecap="round">
<path d="M872.2 41.300A10 10 0 0 0 868.300 59.700" stroke="url(#gPink)" stroke-width="2.200"/>
<path d="M875 41.300A10 10 0 0 1 882.400 46.500" stroke="#dbe9ff" stroke-width="2.200"/>
<path d="M883.450 49.500A10 10 0 0 1 882.900 54.950" stroke="#b8b8b8" stroke-width="2.200"/>
<path d="M881.500 57.400A10 10 0 0 1 870.200 60.600" stroke="#3a86f4" stroke-width="2.300"/>
<path d="M871.450 45.300A6.300 6.300 0 0 1 877.650 56" stroke="#8fc0ff" stroke-width="2"/>
<path d="M875.750 57.100A6.300 6.300 0 0 1 868.400 54.800" stroke="#dcdcdc" stroke-width="2"/>
<path d="M867.500 52.800A6.300 6.300 0 0 1 868.800 47.150" stroke="#c6c6c6" stroke-width="2"/>
</g>

<!-- UYARI -->
<g>
<rect x="914.100" y="38.900" width="23.800" height="23.500" rx="7.200" fill="url(#gWarn)"/>
<path d="M924.400 44.300h3.500l-.7 10.300h-2.100z" fill="#1c1c30"/>
<rect x="924.800" y="55.600" width="2.500" height="2.500" rx="0.500" fill="#1c1c30"/>
</g>

<!-- KAPAT: power -->
<g>
<ellipse cx="978.800" cy="59.400" rx="5.500" ry="0.800" fill="#6a6a6a" opacity="0.600"/>
<path d="M975.700 42.100A7.650 7.650 0 1 0 981 42.100" fill="none" stroke="url(#gPow)" stroke-width="4.100" stroke-linecap="butt"/>
<path d="M976.600 40.300l1.300 5.700" stroke="#ec3a28" stroke-width="3.600" stroke-linecap="round"/>
<path d="M976.200 40.600l1 4.600" stroke="#f8786a" stroke-width="0.900" stroke-linecap="round"/>
</g>
</svg>

<!-- dock icons -->
<svg style="left:0;top:518px" width="160" height="20" viewBox="0 518 160 20">
<defs>
<linearGradient id="gWin" x1="0" y1="0" x2="0" y2="1"><stop offset="0" stop-color="#86bee2"/><stop offset="0.35" stop-color="#4a94c4"/><stop offset="1" stop-color="#2f7fb0"/></linearGradient>
<linearGradient id="gPane" x1="0" y1="0" x2="1" y2="1"><stop offset="0" stop-color="#ececec"/><stop offset="1" stop-color="#bcbcbc"/></linearGradient>
</defs>
<rect x="17.300" y="521.950" width="17.300" height="12.700" fill="#ececec" stroke="#111" stroke-width="0.950"/>
<rect x="16.900" y="521.500" width="2.800" height="13.600" fill="#f02020"/>
<path d="M24.300 524.500h8.700M24.300 527.300h8.700M24.300 530h8.700M21 524.500h1.500M21 527.300h1.500" stroke="#3434a4" stroke-width="1.100"/>
<g>
<rect x="68.100" y="521.100" width="18.700" height="14.400" rx="1.400" fill="url(#gWin)"/>
<rect x="70.100" y="525.800" width="14.900" height="7.800" fill="url(#gPane)"/>
<rect x="80.300" y="522.500" width="4.500" height="2.300" rx="0.400" fill="#d05858"/>
</g>
<g>
<rect x="119.800" y="521.100" width="18.700" height="14.400" rx="1.400" fill="url(#gWin)"/>
<rect x="121.800" y="525.800" width="14.900" height="7.800" fill="url(#gPane)"/>
<rect x="132" y="522.500" width="4.500" height="2.300" rx="0.400" fill="#d05858"/>
</g>
</svg>

</body></html>
